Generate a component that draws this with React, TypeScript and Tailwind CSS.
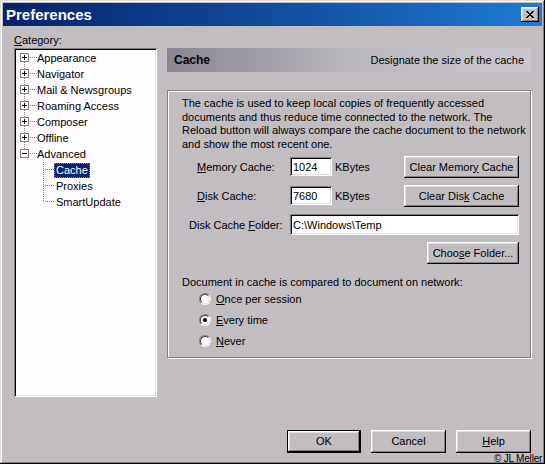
import React from "react";

const raised =
  "shadow-[inset_-1px_-1px_#000,inset_1px_1px_#fff,inset_-2px_-2px_#808080,inset_2px_2px_#dfdfdf]";
const sunken =
  "shadow-[inset_1px_1px_#808080,inset_-1px_-1px_#fff,inset_2px_2px_#000,inset_-2px_-2px_#dfdfdf]";

type RootProps = { open?: boolean; first?: boolean; last?: boolean };

// +/- box with dotted connector lines for top-level tree items
const RootGlyph: React.FC<RootProps> = ({ open, first, last }) => (
  <svg width="21" height="16" shapeRendering="crispEdges" className="shrink-0">
    {!first && (
      <line x1="8.5" y1="0" x2="8.5" y2="3" stroke="#808080" strokeDasharray="1 1" />
    )}
    {!last && (
      <line x1="8.5" y1="12" x2="8.5" y2="16" stroke="#808080" strokeDasharray="1 1" />
    )}
    <line x1="14" y1="7.5" x2="21" y2="7.5" stroke="#808080" strokeDasharray="1 1" />
    <rect x="4.5" y="3.5" width="8" height="8" fill="#fff" stroke="#808080" />
    <rect x="6" y="7" width="5" height="1" fill="#000" />
    {!open && <rect x="8" y="5" width="1" height="5" fill="#000" />}
  </svg>
);

const ChildGlyph: React.FC<{ last?: boolean }> = ({ last }) => (
  <svg width="38" height="16" shapeRendering="crispEdges" className="shrink-0">
    <line
      x1="27.5"
      y1="0"
      x2="27.5"
      y2={last ? 8 : 16}
      stroke="#808080"
      strokeDasharray="1 1"
    />
    <line x1="29" y1="7.5" x2="38" y2="7.5" stroke="#808080" strokeDasharray="1 1" />
  </svg>
);

const CloseIcon = () => {
  const rows = ["11....11", ".11..11.", "..1111..", "...11...", "..1111..", ".11..11.", "11....11"];
  return (
    <svg width="8" height="7" shapeRendering="crispEdges">
      {rows.map((r, y) =>
        r.split("").map((c, x) =>
          c === "1" ? <rect key={`${x}-${y}`} x={x} y={y} width="1" height="1" fill="#000" /> : null
        )
      )}
    </svg>
  );
};

const Radio: React.FC<{ checked?: boolean }> = ({ checked }) => (
  <span className="w-3 h-3 rounded-full border border-t-[#808080] border-l-[#808080] border-b-white border-r-white flex shrink-0">
    <span className="flex-1 rounded-full border border-t-[#404040] border-l-[#404040] border-b-[#dfdfdf] border-r-[#dfdfdf] bg-white flex items-center justify-center">
      {checked && <span className="w-1 h-1 rounded-full bg-black" />}
    </span>
  </span>
);

const Button: React.FC<{ className?: string; children: React.ReactNode; isDefault?: boolean }> = ({
  className = "",
  children,
  isDefault,
}) =>
  isDefault ? (
    <div className={`border border-black flex ${className}`}>
      <div className={`flex-1 flex items-center justify-center ${raised}`}>{children}</div>
    </div>
  ) : (
    <div className={`flex items-center justify-center ${raised} ${className}`}>{children}</div>
  );

const roots = ["Appearance", "Navigator", "Mail & Newsgroups", "Roaming Access", "Composer", "Offline"];

export default function App() {
  return (
    <div className="w-[545px] h-[464px] bg-[#c1bdc1] relative overflow-hidden p-[3px] text-[11px] text-black font-['Liberation_Sans',Arial,sans-serif] shadow-[inset_-1px_-1px_#000,inset_1px_1px_#dfdfdf,inset_-2px_-2px_#808080,inset_2px_2px_#fff]">
      {/* Title bar */}
      <div className="h-[23px] bg-linear-to-r from-[#08226c] to-[#1f7ad3] flex items-center pl-[3px] pr-[3px]">
        <span className="text-white font-bold text-[15px] leading-none">Preferences</span>
        <div className={`ml-auto w-[18px] h-[15px] bg-[#c1bdc1] flex items-center justify-center ${raised}`}>
          <CloseIcon />
        </div>
      </div>

      <div className="flex pl-[11px] mt-[7px]">
        {/* Category tree */}
        <div className="w-[143px] flex flex-col">
          <div className="h-[14px] leading-[14px]">
            <u>C</u>ategory:
          </div>
          <div className={`mt-[1px] h-[349px] bg-[#fffbff] p-[2px] ${sunken}`}>
            {roots.map((r, i) => (
              <div key={r} className="h-4 flex items-center">
                <RootGlyph first={i === 0} />
                <span>{r}</span>
              </div>
            ))}
            <div className="h-4 flex items-center">
              <RootGlyph open last />
              <span>Advanced</span>
            </div>
            <div className="h-4 flex items-center">
              <ChildGlyph />
              <span className="bg-[#0a246a] text-white px-[2px] h-[15px] leading-[15px] outline outline-1 outline-dotted outline-[#8a8a8a] -outline-offset-1">
                Cache
              </span>
            </div>
            <div className="h-4 flex items-center">
              <ChildGlyph />
              <span className="px-[2px]">Proxies</span>
            </div>
            <div className="h-4 flex items-center">
              <ChildGlyph last />
              <span className="px-[2px]">SmartUpdate</span>
            </div>
          </div>
        </div>

        {/* Right panel */}
        <div className="w-[364px] ml-[10px] pt-[15px] flex flex-col">
          <div className="h-[24px] bg-linear-to-r from-[#8a8690] via-[#bab6be] to-[#cbc7cf] flex items-center px-[7px]">
            <span className="font-bold text-[12px]">Cache</span>
            <span className="ml-auto">Designate the size of the cache</span>
          </div>

          <div className="mt-[18px] h-[268px] border border-[#808080] shadow-[inset_1px_1px_#fff,1px_1px_#fff] pt-[6px] pl-[14px] pr-[11px] flex flex-col">
            <p className="leading-[13.7px] whitespace-nowrap">
              The cache is used to keep local copies of frequently accessed
              <br />
              documents and thus reduce time connected to the network. The
              <br />
              Reload button will always compare the cache document to the network
              <br />
              and show the most recent one.
            </p>

            <div className="mt-[4px] h-[22px] flex items-center">
              <span className="ml-[15px] w-[93px]">
                <u>M</u>emory Cache:
              </span>
              <input
                readOnly
                value="1024"
                className={`w-[42px] h-[19px] bg-white pl-[3px] outline-none ${sunken}`}
              />
              <span className="ml-[3px]">KBytes</span>
              <Button className="ml-auto w-[115px] h-[22px]">
                Clear Memor<u>y</u>&nbsp;Cache
              </Button>
            </div>

            <div className="mt-[7px] h-[22px] flex items-center">
              <span className="ml-[15px] w-[93px]">
                <u>D</u>isk Cache:
              </span>
              <input
                readOnly
                value="7680"
                className={`w-[42px] h-[19px] bg-white pl-[3px] outline-none ${sunken}`}
              />
              <span className="ml-[3px]">KBytes</span>
              <Button className="ml-auto w-[115px] h-[22px]">
                Clear Dis<u>k</u>&nbsp;Cache
              </Button>
            </div>

            <div className="mt-[7px] h-[22px] flex items-center">
              <span className="ml-[7px] w-[101px]">
                Disk Cache <u>F</u>older:
              </span>
              <input
                readOnly
                value="C:\Windows\Temp"
                className={`flex-1 h-[21px] bg-white pl-[3px] outline-none ${sunken}`}
              />
            </div>

            <Button className="mt-[6px] self-end w-[92px] h-[22px]">
              Choo<u>s</u>e Folder...
            </Button>

            <div className="mt-[11px] h-[14px] leading-[14px]">
              Document in cache is compared to document on network:
            </div>
            {[
              { k: "O", rest: "nce per session", c: false },
              { k: "E", rest: "very time", c: true },
              { k: "N", rest: "ever", c: false },
            ].map((r) => (
              <div key={r.k} className="h-[21px] flex items-center pl-[17px] gap-[5px]">
                <Radio checked={r.c} />
                <span>
                  <u>{r.k}</u>
                  {r.rest}
                </span>
              </div>
            ))}
          </div>
        </div>
      </div>

      {/* Dialog buttons */}
      <div className="ml-[11px] w-[517px] mt-[33px] flex justify-end gap-[10px]">
        <Button isDefault className="w-[74px] h-[23px]">
          OK
        </Button>
        <Button className="w-[75px] h-[23px]">Cancel</Button>
        <Button className="w-[75px] h-[23px]">
          <u>H</u>elp
        </Button>
      </div>

      {/* watermark */}
      <span className="absolute left-[494px] top-[454px] whitespace-nowrap text-[10px] leading-[10px] tracking-[-0.2px]">
        © JL Meller
      </span>
    </div>
  );
}
